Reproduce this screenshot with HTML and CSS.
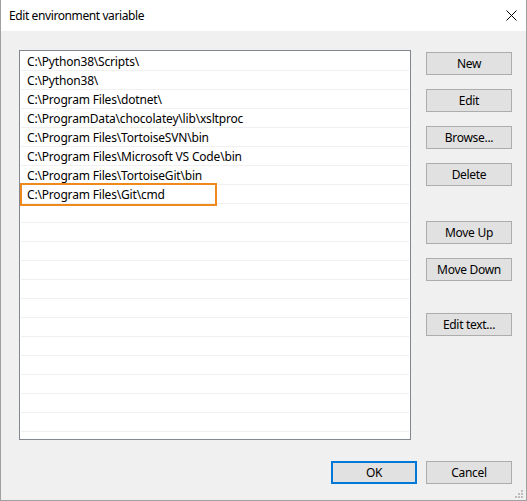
FILE: index.html
```html
<!DOCTYPE html>
<html>
<head>
<meta charset="utf-8">
<link rel="stylesheet" href="styles.css">
</head>
<body>
<div class="window">
  <div class="titlebar">
    <span class="title">Edit environment variable</span>
    <svg class="close" width="11" height="11" viewBox="0 0 11 11"><path d="M0.5 0.5 L10.5 10.5 M10.5 0.5 L0.5 10.5" stroke="#000" stroke-width="1" fill="none"/></svg>
  </div>
  <div class="content">
    <div class="main">
      <div class="list">
        <div class="row">C:\Python38\Scripts\</div>
        <div class="row">C:\Python38\</div>
        <div class="row">C:\Program Files\dotnet\</div>
        <div class="row">C:\ProgramData\chocolatey\lib\xsltproc</div>
        <div class="row">C:\Program Files\TortoiseSVN\bin</div>
        <div class="row">C:\Program Files\Microsoft VS Code\bin</div>
        <div class="row">C:\Program Files\TortoiseGit\bin</div>
        <div class="row marked">C:\Program Files\Git\cmd<span class="mark"></span></div>
        <div class="row"></div>
        <div class="row"></div>
        <div class="row"></div>
        <div class="row"></div>
        <div class="row"></div>
        <div class="row"></div>
        <div class="row"></div>
        <div class="row"></div>
        <div class="row"></div>
        <div class="row"></div>
        <div class="row"></div>
        <div class="row"></div>
        <div class="row"></div>
      </div>
      <div class="side">
        <button class="btn">New</button>
        <button class="btn">Edit</button>
        <button class="btn">Browse...</button>
        <button class="btn">Delete</button>
        <button class="btn gap-up">Move Up</button>
        <button class="btn">Move Down</button>
        <button class="btn gap-text">Edit text...</button>
      </div>
    </div>
    <div class="footer">
      <button class="btn default">OK</button>
      <button class="btn">Cancel</button>
    </div>
    <svg class="grip" width="9" height="9" viewBox="0 0 9 9">
      <rect x="7" y="1" width="2" height="2" fill="#bdbdbd"/>
      <rect x="4" y="4" width="2" height="2" fill="#bdbdbd"/>
      <rect x="7" y="4" width="2" height="2" fill="#bdbdbd"/>
      <rect x="1" y="7" width="2" height="2" fill="#bdbdbd"/>
      <rect x="4" y="7" width="2" height="2" fill="#bdbdbd"/>
      <rect x="7" y="7" width="2" height="2" fill="#bdbdbd"/>
    </svg>
  </div>
</div>
</body>
</html>
```
FILE: styles.css
```css
html, body {
  margin: 0;
  padding: 0;
  background: #f0f0f0;
}
body {
  font-family: "Noto Sans", "Open Sans", sans-serif;
  font-size: 12px;
  color: #000;
}
.window {
  width: 527px;
  height: 501px;
  box-sizing: border-box;
  border: 1px solid #a0a0a0;
  border-top: none;
  display: flex;
  flex-direction: column;
  background: #f0f0f0;
}
.titlebar {
  height: 31px;
  background: #fff;
  display: flex;
  align-items: center;
  padding-left: 8px;
  padding-right: 9px;
  flex: none;
}
.title {
  font-size: 12px;
  letter-spacing: -0.4px;
  color: #000;
}
.close {
  margin-left: auto;
  margin-top: -1px;
}
.content {
  flex: 1;
  position: relative;
  display: flex;
  flex-direction: column;
}
.main {
  display: flex;
  padding-top: 19px;
  padding-left: 18px;
}
.list {
  width: 392px;
  height: 390px;
  box-sizing: border-box;
  border: 1px solid #828790;
  background: #fff;
  padding: 1px 1px 0 1px;
  overflow: hidden;
}
.row {
  height: 19px;
  box-sizing: border-box;
  border-bottom: 1px solid #f0f0f0;
  padding-left: 6px;
  padding-top: 1px;
  line-height: 18px;
  letter-spacing: -0.18px;
  white-space: nowrap;
  position: relative;
}
.mark {
  position: absolute;
  left: -1px;
  top: -2px;
  width: 197px;
  height: 23px;
  box-sizing: border-box;
  border: 2px solid #f0891c;
}
.side {
  display: flex;
  flex-direction: column;
  margin-left: 15px;
  padding-top: 2px;
}
.btn {
  width: 86px;
  height: 23px;
  box-sizing: border-box;
  border: 1px solid #adadad;
  background: #e1e1e1;
  font-family: inherit;
  font-size: 12px;
  letter-spacing: -0.3px;
  color: #000;
  padding: 0;
  margin: 0 0 14px 0;
  line-height: 20px;
}
.side .gap-up {
  margin-top: 21px;
}
.side .gap-text {
  margin-top: 18px;
}
.footer {
  display: flex;
  justify-content: flex-end;
  padding-top: 21px;
  padding-right: 14px;
  gap: 9px;
}
.footer .btn {
  margin: 0;
}
.btn.default {
  border: 2px solid #0078d7;
}
.grip {
  position: absolute;
  right: 3px;
  bottom: 2px;
}
```
